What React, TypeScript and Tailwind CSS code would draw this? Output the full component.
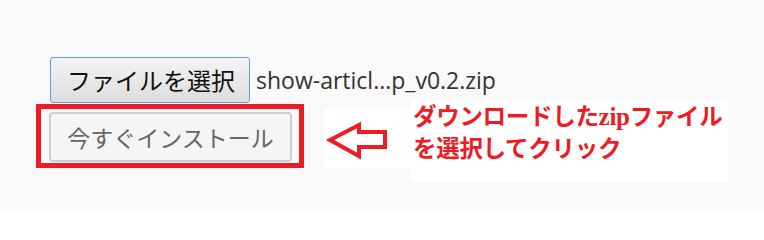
import React from "react";

export default function App() {
  return (
    <div className="w-[764px] h-[211px] bg-[#f9f9f9] overflow-hidden pl-[36px] pt-[57px] font-['Noto_Sans_CJK_JP',sans-serif]">
      <div className="flex items-center ml-[14px] h-[46px]">
        <button className="h-[46px] w-[200px] border border-[#5c9cf0] rounded-[3px] bg-gradient-to-b from-[#f4f4f4] to-[#dddddd] text-[#111] text-[24px] leading-none flex items-center pl-[16px] font-['Noto_Sans_CJK_JP',sans-serif]">
          ファイルを選択
        </button>
        <span className="ml-[6px] text-[23px] text-[#333] font-['Open_Sans','Noto_Sans',sans-serif]">
          show-articl...p_v0.2.zip
        </span>
      </div>
      <div className="flex items-start mt-[1px]">
        <div className="w-[268px] h-[64px] border-[5px] border-[#ed1c24] pl-[8px] pt-[3px]">
          <button className="w-[243px] h-[50px] border-2 border-[#cfcfcf] rounded-[4px] bg-[#f5f5f5] text-[#666] text-[23px] leading-none flex items-center justify-center font-['Noto_Sans_CJK_JP',sans-serif]">
            今すぐインストール
          </button>
        </div>
        <div className="ml-[20px] mt-[5px] w-[87px] h-[59px] bg-white">
          <svg width="87" height="59" viewBox="0 0 87 59">
            <polygon
              points="6,31 35,16 35,23 61,23 61,38 35,38 35,47"
              fill="none"
              stroke="#ed1c24"
              strokeWidth="4"
              strokeLinejoin="miter"
            />
          </svg>
        </div>
        <div className="-mt-[4px] w-[317px] h-[82px] bg-white pl-[2px] text-[#ed1c24] font-bold text-[23.5px] leading-[31px] tracking-[-0.3px] font-['Noto_Sans_CJK_JP',sans-serif]">
          <div>
            ダウンロードした
            <span className="font-['Liberation_Serif',serif] text-[25px]">zip</span>
            ファイル
          </div>
          <div>を選択してクリック</div>
        </div>
      </div>
    </div>
  );
}
